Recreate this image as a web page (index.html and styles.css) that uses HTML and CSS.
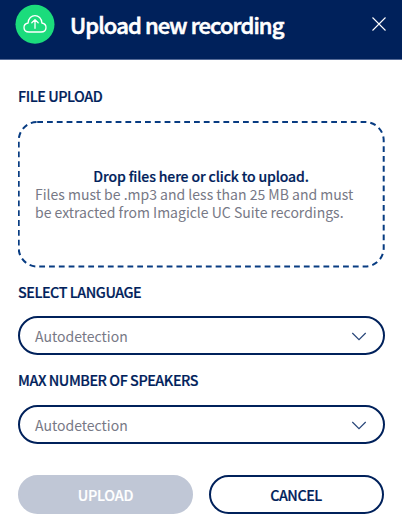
FILE: index.html
```
<!DOCTYPE html>
<html lang="en">
<head>
<meta charset="utf-8">
<title>Upload new recording</title>
<link rel="stylesheet" href="styles.css">
</head>
<body>
<main class="dialog">
  <header class="header">
    <svg class="badge" viewBox="0 0 40 40" aria-hidden="true">
      <circle cx="20" cy="20.200" r="19.500" fill="#1bdc7c"/>
      <g fill="none" stroke="#fff" stroke-width="1.300" stroke-linecap="round" stroke-linejoin="round">
        <path d="M14 28 C7.600 28 7.400 20 13.100 19 C13.400 9.100 26.600 9.100 26.900 19 C32.600 20 32.400 28 26 28 Z"/>
        <path d="M20 24.300 V15.800 M16.800 18.800 L20 15.600 L23.200 18.800"/>
      </g>
    </svg>
    <h1 class="title">Upload new recording</h1>
    <svg class="close" viewBox="0 0 16 16" aria-hidden="true"><path d="M1.500 1.500 L14.500 14.500 M14.500 1.500 L1.500 14.500"/></svg>
  </header>
  <form class="form">
    <div class="label label-file"><span>FILE UPLOAD</span></div>
    <div class="drop">
      <svg class="outline" viewBox="0 0 367 147" aria-hidden="true"><rect x="0.700" y="1" width="365" height="144.500" rx="18.500"/></svg>
      <p class="prompt">Drop files here or click to upload.</p>
      <p class="hint">Files must be .mp3 and less than 25 MB and must<br>be extracted from Imagicle UC Suite recordings.</p>
    </div>
    <div class="label label-language"><span>SELECT LANGUAGE</span></div>
    <div class="select"><span>Autodetection</span><svg class="chevron" viewBox="0 0 16 9" aria-hidden="true"><path d="M1.300 1 L8 7.700 L14.700 1"/></svg></div>
    <div class="label label-speakers"><span>MAX NUMBER OF SPEAKERS</span></div>
    <div class="select"><span>Autodetection</span><svg class="chevron" viewBox="0 0 16 9" aria-hidden="true"><path d="M1.300 1 L8 7.700 L14.700 1"/></svg></div>
    <div class="actions">
      <button type="button" class="button upload"><span>UPLOAD</span></button>
      <button type="button" class="button cancel"><span>CANCEL</span></button>
    </div>
  </form>
</main>
</body>
</html>
```
FILE: styles.css
```
* { box-sizing: border-box; margin: 0; }
body {
  background: #fff;
  color: #00215b;
  font-family: "Noto Sans CJK SC", "Noto Sans", sans-serif;
  font-size: 14px;
}
.dialog { width: 402px; height: 522px; overflow: hidden; }
.header {
  display: flex;
  align-items: center;
  height: 60px;
  padding: 0 15px 11px 15px;
  background: #00215b;
  border-bottom: 1px solid #566b97;
}
.badge { width: 40px; height: 40px; }
.title {
  margin: -1px 0 0 15px;
  color: #fff;
  font-size: 22px;
  line-height: 30px;
  font-weight: 500;
  white-space: nowrap;
  letter-spacing: -0.900px;
  -webkit-text-stroke: 0.600px #fff;
}
.close { width: 16px; height: 16px; margin-left: auto; }
.close path { fill: none; stroke: #fff; stroke-width: 1.100; }
.form { padding: 0 17px 0 18px; }
.label {
  display: flex;
  align-items: center;
  font-size: 14.300px;
  line-height: 20px;
  font-weight: 500;
  letter-spacing: -0.430px;
  -webkit-text-stroke: 0.200px #00215b;
}
.label-file { height: 61px; padding-top: 11px; }
.label-language { height: 48px; }
.label-speakers { height: 50px; }
.drop {
  position: relative;
  height: 147px;
  padding: 46px 17px 0;
}
.outline { position: absolute; inset: 0; width: 367px; height: 147px; }
.outline rect { fill: none; stroke: #083c82; stroke-width: 2; stroke-dasharray: 5.800 4; }
.prompt {
  padding-right: 1px;
  font-weight: 500;
  line-height: 18px;
  text-align: center;
  letter-spacing: -0.120px;
  -webkit-text-stroke: 0.200px #00215b;
}
.hint { padding-top: 1px; color: #777986; line-height: 17.500px; white-space: nowrap; }
.select {
  display: flex;
  align-items: center;
  justify-content: space-between;
  height: 39px;
  padding: 0 16px 0 15px;
  border: 2px solid #00215b;
  border-radius: 20px;
  color: #777986;
}
.chevron { width: 16px; height: 9px; margin-top: 2px; }
.chevron path { fill: none; stroke: #284679; stroke-width: 1.200; }
.actions { display: flex; gap: 16px; margin-top: 31px; }
.button {
  width: 175px;
  height: 39px;
  padding: 0;
  border: 2px solid #00215b;
  border-radius: 20px;
  background: #fff;
  color: #00215b;
  font: 500 14.300px/20px "Noto Sans CJK SC", "Noto Sans", sans-serif;
  letter-spacing: -0.450px;
  -webkit-text-stroke: 0.200px currentColor;
}
.upload { background: #c0c7d6; border-color: #c0c7d6; color: #fff; letter-spacing: -0.200px; }
.cancel { padding-right: 1px; }
```
